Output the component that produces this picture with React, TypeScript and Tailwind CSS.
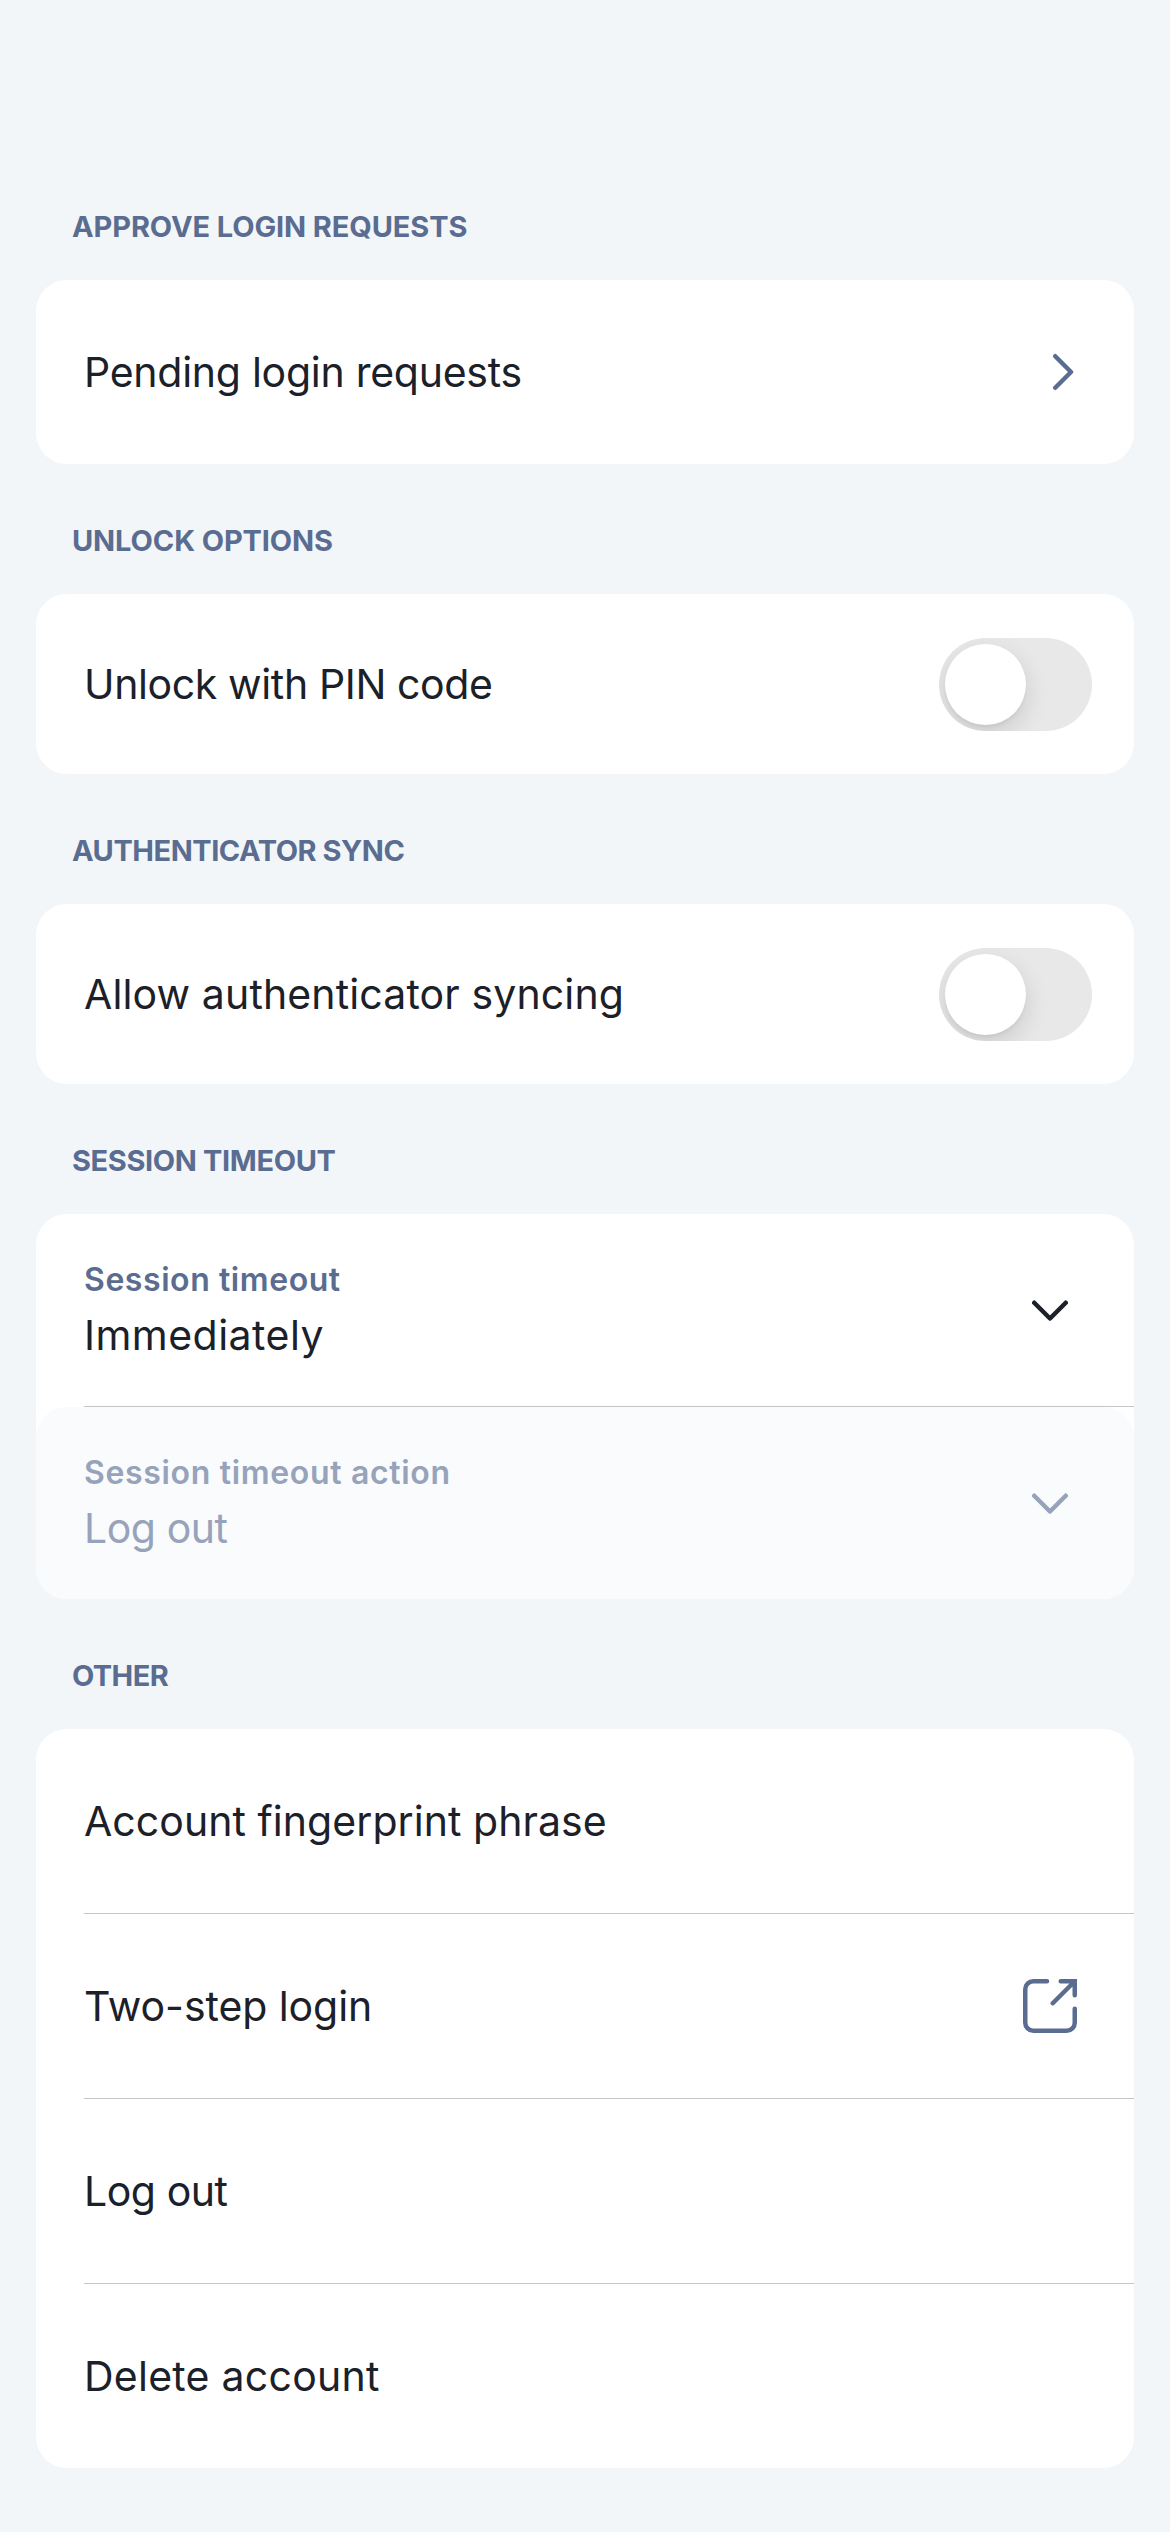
import React from 'react';

function SectionHeader({ title, tracking }: { title: string; tracking: string }) {
  return (
    <h2 className={`flex h-[130px] items-center pl-[36px] pt-[23px] text-[29px] font-bold leading-none text-[#5a6d91] ${tracking}`}>
      {title}
    </h2>
  );
}

function Card({ children }: { children: React.ReactNode }) {
  return <div className="overflow-hidden rounded-[31px] bg-white">{children}</div>;
}

function Divider() {
  return <div className="ml-12 h-px bg-[#c6c6c8]" />;
}

function Row({
  label,
  tracking = '',
  height = 'h-[184px]',
  children,
}: {
  label: string;
  tracking?: string;
  height?: string;
  children?: React.ReactNode;
}) {
  return (
    <div className={`flex items-center justify-between pl-12 ${height}`}>
      <span className={`whitespace-nowrap pt-px text-[41px] leading-none ${tracking}`}>{label}</span>
      {children}
    </div>
  );
}

function Toggle() {
  return (
    <div className="mr-[42px] mt-px flex h-[93px] w-[153px] overflow-hidden rounded-full bg-[#e8e8e8] p-[6px]">
      <div className="size-[81px] rounded-full bg-white shadow-[0_9px_24px_rgba(0,0,0,0.13),0_3px_3px_rgba(0,0,0,0.04)]" />
    </div>
  );
}

function ChevronDown() {
  return (
    <svg className="mr-[66px] mt-[2px] shrink-0" width="36" height="22" viewBox="0 0 36 22" fill="none" stroke="currentColor" strokeWidth="4.5" strokeLinecap="round" strokeLinejoin="round">
      <path d="M2.25 2.75L18 18.5L33.75 2.75" />
    </svg>
  );
}

function MenuField({
  label,
  value,
  labelTracking,
  valueTracking,
  disabled = false,
}: {
  label: string;
  value: string;
  labelTracking: string;
  valueTracking: string;
  disabled?: boolean;
}) {
  return (
    <div className={`flex h-[192px] items-center justify-between pl-12 ${disabled ? 'rounded-[31px] bg-[#fafbfd] text-[#96a3bb]' : ''}`}>
      <div className="flex flex-col">
        <span className={`text-[32px] font-semibold leading-[50px] ${disabled ? '' : 'text-[#5a6d91]'} ${labelTracking}`}>{label}</span>
        <span className={`text-[41px] leading-[60px] ${valueTracking}`}>{value}</span>
      </div>
      <ChevronDown />
    </div>
  );
}

export default function App() {
  return (
    <main className="h-[2532px] w-[1170px] overflow-hidden bg-[#f3f6f9] px-9 pt-[150px] font-['Inter',sans-serif] text-[#1b2029]">
      <SectionHeader title="APPROVE LOGIN REQUESTS" tracking="tracking-[-0.11px]" />
      <Card>
        <Row label="Pending login requests" tracking="tracking-[-0.26px]">
          <svg className="mr-[60px]" width="22" height="38" viewBox="0 0 22 38" fill="none" stroke="#5a6d91" strokeWidth="4.5" strokeLinecap="round" strokeLinejoin="round">
            <path d="M3.25 3.25L19 19L3.25 34.75" />
          </svg>
        </Row>
      </Card>

      <SectionHeader title="UNLOCK OPTIONS" tracking="tracking-[-0.11px]" />
      <Card>
        <Row label="Unlock with PIN code" tracking="tracking-[-0.37px]" height="h-[180px]">
          <Toggle />
        </Row>
      </Card>

      <SectionHeader title="AUTHENTICATOR SYNC" tracking="tracking-[-0.46px]" />
      <Card>
        <Row label="Allow authenticator syncing" tracking="tracking-[0.13px]" height="h-[180px]">
          <Toggle />
        </Row>
      </Card>

      <SectionHeader title="SESSION TIMEOUT" tracking="tracking-[-0.37px]" />
      <Card>
        <MenuField label="Session timeout" labelTracking="tracking-[0.57px]" value="Immediately" valueTracking="tracking-[0.47px]" />
        <Divider />
        <MenuField label="Session timeout action" labelTracking="tracking-[0.67px]" value="Log out" valueTracking="tracking-[-0.45px]" disabled />
      </Card>

      <SectionHeader title="OTHER" tracking="tracking-[-0.6px]" />
      <Card>
        <Row label="Account fingerprint phrase" tracking="tracking-[0.06px]" />
        <Divider />
        <Row label="Two-step login" tracking="tracking-[-0.07px]">
          <svg className="mr-[57px]" width="54" height="54" viewBox="0 0 54 54" fill="none" stroke="#5a6d91" strokeWidth="4.5" strokeLinecap="round">
            <path d="M24 2.25H10.25a8 8 0 0 0-8 8V43.75a8 8 0 0 0 8 8H43.75a8 8 0 0 0 8-8V29.75" />
            <path d="M37.75 2.25H51.75V16.25M51 3L29.75 24.25" />
          </svg>
        </Row>
        <Divider />
        <Row label="Log out" tracking="tracking-[-0.45px]" />
        <Divider />
        <Row label="Delete account" tracking="tracking-[0.25px]" />
      </Card>
    </main>
  );
}
